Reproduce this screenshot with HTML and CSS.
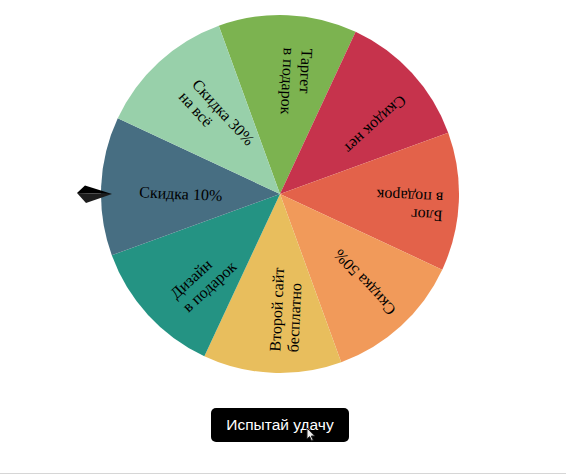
FILE: index.html
```html
<!DOCTYPE html>
<html lang="ru">
<head>
  <meta charset="UTF-8">
  <meta name="viewport" content="width=device-width, initial-scale=1.0">
  <title>Колесо удачи</title>
  <link rel="stylesheet" href="styles.css">
</head>
<body>
  <main class="game">
    <svg class="wheel" viewBox="0 0 566 392" width="566" height="392">
      <!-- Sectors, clockwise from the top one -->
      <g class="sectors">
        <path fill="#7cb350" d="M280 194 L218.78 25.79 A179 179 0 0 1 355.65 31.77 Z"/>
        <path fill="#c6334c" d="M280 194 L355.65 31.77 A179 179 0 0 1 448.21 132.78 Z"/>
        <path fill="#e3624a" d="M280 194 L448.21 132.78 A179 179 0 0 1 442.23 269.65 Z"/>
        <path fill="#f19a5a" d="M280 194 L442.23 269.65 A179 179 0 0 1 341.22 362.21 Z"/>
        <path fill="#e8be5d" d="M280 194 L341.22 362.21 A179 179 0 0 1 204.35 356.23 Z"/>
        <path fill="#249383" d="M280 194 L204.35 356.23 A179 179 0 0 1 111.79 255.22 Z"/>
        <path fill="#476e82" d="M280 194 L111.79 255.22 A179 179 0 0 1 117.77 118.35 Z"/>
        <path fill="#98d0aa" d="M280 194 L117.77 118.35 A179 179 0 0 1 218.78 25.79 Z"/>
      </g>

      <!-- Prize labels, read from the rim toward the hub -->
      <g class="labels" transform="translate(291 200)">
        <text transform="rotate(92.5)"><tspan x="-152" y="-4">Таргет</tspan><tspan x="-152" y="14">в подарок</tspan></text>
        <text transform="rotate(137.5)"><tspan x="-152" y="4">Скидок нет</tspan></text>
        <text transform="rotate(182.5)"><tspan x="-152" y="-4">Блог</tspan><tspan x="-152" y="14">в подарок</tspan></text>
        <text transform="rotate(227.5)"><tspan x="-152" y="4">Скидка 50%</tspan></text>
        <text transform="rotate(272.5)"><tspan x="-152" y="-4">Второй сайт</tspan><tspan x="-152" y="14">бесплатно</tspan></text>
        <text transform="rotate(317.5)"><tspan x="-152" y="-4">Дизайн</tspan><tspan x="-152" y="14">в подарок</tspan></text>
        <text transform="rotate(2.5)"><tspan x="-152" y="4">Скидка 10%</tspan></text>
        <text transform="rotate(47.5)"><tspan x="-152" y="-4">Скидка 30%</tspan><tspan x="-152" y="14">на всё</tspan></text>
      </g>

      <!-- Pointer -->
      <g class="pointer">
        <polygon fill="#000" points="77,193 85,185.5 112,194"/>
        <polygon fill="#1d1d1d" points="77,193 112,194 86,203"/>
      </g>
    </svg>

    <div class="actions">
      <button class="spin-btn" type="button">Испытай удачу</button>
      <svg class="cursor" width="10" height="15" viewBox="0 0 10 15">
        <path d="M1 1 L1 12 L3.6 9.6 L5.6 14 L7.2 13.2 L5.3 9 L8.8 9 Z" fill="#eee" stroke="#222" stroke-width="1"/>
      </svg>
    </div>
  </main>

  <div class="footer-line"></div>
</body>
</html>
```

FILE: styles.css
```css
/* General styles */
body {
  margin: 0;
  padding: 0;
  background-color: #fff;
  font-family: 'Liberation Sans', Arial, sans-serif;
  overflow: hidden;
}

.game {
  display: flex;
  flex-direction: column;
}

.wheel {
  display: block;
}

.labels {
  font-family: 'Liberation Serif', 'Times New Roman', serif;
  font-size: 16px;
  fill: #000;
}

.actions {
  position: relative;
  display: flex;
  justify-content: center;
  margin-top: 16px;
}

.spin-btn {
  width: 138px;
  height: 34px;
  margin-right: 6px;
  padding: 0;
  border: none;
  border-radius: 5px;
  background-color: #000;
  color: #fff;
  font-family: 'Liberation Sans', Arial, sans-serif;
  font-size: 15.5px;
  cursor: pointer;
}

.cursor {
  position: absolute;
  left: 306px;
  top: 19px;
}

.footer-line {
  margin-top: 31px;
  border-top: 1px solid #d6d6d6;
}
```
